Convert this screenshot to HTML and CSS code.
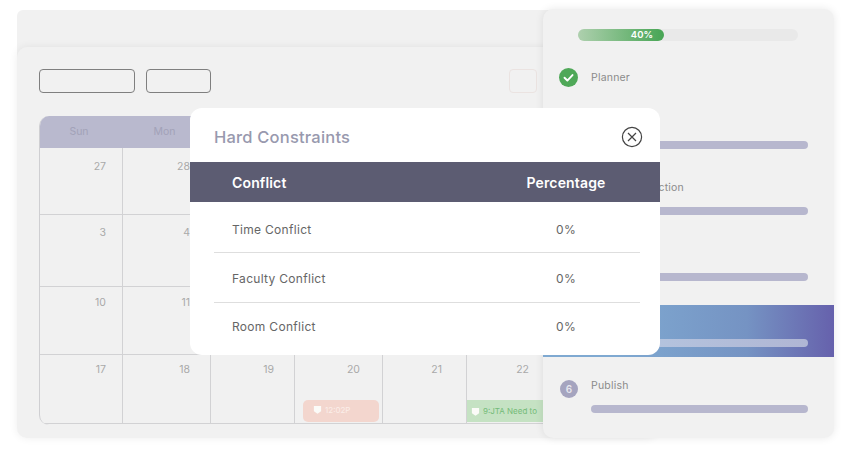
FILE: index.html
```html
<!DOCTYPE html>
<html lang="en">
<head>
<meta charset="utf-8">
<title>Hard Constraints</title>
<link rel="stylesheet" href="styles.css">
</head>
<body>
<div class="stage">
  <div class="win back"></div>
  <section class="win main">
    <div class="toolbar">
      <span class="tbox wide"></span>
      <span class="tbox narrow"></span>
      <span class="tbox pale"></span>
    </div>
    <div class="cal">
      <div class="cal-head">
        <span>Sun</span><span>Mon</span><span></span><span></span><span></span><span></span>
      </div>
      <div class="cal-row r1">
        <div class="cell">27</div><div class="cell">28</div><div class="cell"></div><div class="cell"></div><div class="cell"></div><div class="cell"></div>
      </div>
      <div class="cal-row r2">
        <div class="cell">3</div><div class="cell">4</div><div class="cell"></div><div class="cell"></div><div class="cell"></div><div class="cell"></div>
      </div>
      <div class="cal-row r3">
        <div class="cell">10</div><div class="cell">11</div><div class="cell"></div><div class="cell"></div><div class="cell"></div><div class="cell"></div>
      </div>
      <div class="cal-row r4">
        <div class="cell">17</div><div class="cell">18</div><div class="cell">19</div>
        <div class="cell">20
          <div class="event red"><svg class="ev-ico" viewBox="0 0 10 10"><path d="M1 1h8v6l-4 2.6-4-2.6z"/></svg><span>12:02P</span></div>
        </div>
        <div class="cell">21</div>
        <div class="cell">22
          <div class="event green"><svg class="ev-ico" viewBox="0 0 10 10"><path d="M1 1h8v6l-4 2.6-4-2.6z"/></svg><span>9:JTA Need to</span></div>
        </div>
      </div>
    </div>
  </section>

  <aside class="win side">
    <div class="track"><div class="fill">40%</div></div>
    <div class="planner">
      <svg class="check" viewBox="0 0 20 20"><circle cx="10" cy="10" r="10" fill="#4fa858"/><path d="M5.8 10.3l3 2.9 5.4-5.8" fill="none" stroke="#fff" stroke-width="2" stroke-linecap="round" stroke-linejoin="round"/></svg>
      <span class="label">Planner</span>
    </div>
    <div class="step"><span class="label"></span><div class="bar"></div></div>
    <div class="step"><span class="label">Data Construction</span><div class="bar"></div></div>
    <div class="step"><span class="label"></span><div class="bar"></div></div>
    <div class="step active"><span class="label"></span><div class="bar"></div></div>
    <div class="step"><span class="num">6</span><span class="label">Publish</span><div class="bar"></div></div>
  </aside>

  <section class="modal">
    <header class="modal-head">
      <h2>Hard Constraints</h2>
      <svg class="close" viewBox="0 0 22 22"><circle cx="11" cy="11" r="9.6" fill="none" stroke="#444" stroke-width="1.2"/><path d="M7 7l8 8M15 7l-8 8" stroke="#444" stroke-width="1.2" fill="none"/></svg>
    </header>
    <div class="thead"><span>Conflict</span><span class="pct">Percentage</span></div>
    <div class="trow first"><span>Time Conflict</span><span class="pct">0%</span></div>
    <div class="trow middle"><span>Faculty Conflict</span><span class="pct">0%</span></div>
    <div class="trow last"><span>Room Conflict</span><span class="pct">0%</span></div>
  </section>
</div>
</body>
</html>
```
FILE: styles.css
```css
* { box-sizing: border-box; }
html, body { margin: 0; padding: 0; background: #fff; }
body { font-family: Inter, "Open Sans", sans-serif; overflow: hidden; }

.stage { position: relative; width: 850px; height: 450px; overflow: hidden; }

.win { position: absolute; background: #f1f1f1; }

.back { left: 17px; top: 10px; width: 600px; height: 100px; border-radius: 6px 6px 0 0; }

.main {
  left: 17px; top: 47px; width: 640px; height: 391px;
  padding: 22px 0 0 22px;
  border-radius: 10px;
  box-shadow: 0 0 9px rgba(0,0,0,.07);
}

.toolbar { display: flex; gap: 11px; width: 498px; height: 24px; margin-bottom: 23px; }
.tbox { display: block; border: 1px solid #7f7f7f; border-radius: 4px; }
.wide { width: 96px; }
.narrow { width: 65px; }
.pale { width: 28px; margin-left: auto; border-color: #ebe3e1; }

.cal { width: 504px; height: 309px; overflow: hidden; border-left: 1px solid #cfcfd2; border-radius: 10px 0 0 10px; }
.cal-head, .cal-row { display: grid; grid-template-columns: 83px 88px 84px 88px 84px 77px; }
.cal-head {
  height: 32px; margin-left: -1px; background: #b9b9ce; color: #a2a2b8;
  font-size: 10.5px; text-align: center; line-height: 32px;
}
.cal-head span { padding-right: 3px; }
.cal-row { border-bottom: 1px solid #d2d2d4; }
.r1 { height: 67px; }
.r2 { height: 72px; }
.r3 { height: 68px; }
.r4 { height: 69px; }
.cell {
  position: relative; display: flex; flex-direction: column; align-items: flex-end;
  padding: 11px 16px 0 0;
  border-right: 1px solid #d2d2d4;
  color: #a9a9a9; font-size: 10.5px; line-height: 14px;
}
.cell:last-child { border-right: 0; }
.r1 .cell { padding-top: 12px; }
.r3 .cell { padding-top: 9px; }
.r4 .cell { padding-top: 8px; }
.cal-row .cell:nth-child(n+2) { padding-right: 20px; }
.cal-row .cell:nth-child(4) { padding-right: 22px; }
.cal-row .cell:nth-child(5) { padding-right: 24px; }
.cal-row .cell:nth-child(6) { padding-right: 15px; }

.event {
  display: flex; align-items: center; gap: 3px;
  position: absolute; bottom: 1px; height: 22px;
  font-size: 8px; white-space: nowrap;
}
.event.red { left: 8px; width: 76px; padding: 0 0 3px 10px; background: #f3d6ce; color: #fbeee9; border-radius: 5px; }
.event.green { left: 0; right: 0; padding-left: 4px; background: #c5e2c3; color: #74bb78; }
.ev-ico { width: 9px; height: 9px; fill: #fbfbf8; flex: none; }

.side {
  left: 543px; top: 9px; width: 291px; height: 429px;
  padding-top: 20px;
  border-radius: 10px;
  box-shadow: 0 0 8px rgba(0,0,0,.09);
  overflow: hidden;
}
.track { width: 220px; height: 12px; margin-left: 35px; background: #e9e9e9; border-radius: 6px; }
.fill {
  width: 86px; height: 12px; padding-right: 11px;
  border-radius: 6px;
  background: linear-gradient(90deg, #aed0ae, #47a554);
  color: #fff; font-size: 9.5px; font-weight: 600; line-height: 12px; text-align: right;
}
.planner { display: flex; align-items: center; height: 44px; margin-top: 22px; padding: 0 0 16px 16px; }
.check { width: 19px; height: 19px; flex: none; margin-right: 13px; }
.label { color: #8b8b8b; font-size: 10.5px; letter-spacing: .2px; white-space: nowrap; }
.step { position: relative; height: 66px; padding: 8px 26px 0 48px; }
.step .label { display: block; height: 14px; line-height: 14px; }
.bar { height: 8px; margin-top: 12px; background: #b7b7ce; border-radius: 4px; }
.active { background: linear-gradient(90deg, #7fa9d1 25%, #7593c3 70%, #6661ac) no-repeat 0 0 / 100% 52px; }
.active .bar { background: linear-gradient(90deg, #b6c9e2, #b0b6d4); }
.num {
  position: absolute; left: 17px; top: 9px;
  width: 18px; height: 18px; border-radius: 50%;
  background: #a5a4bf; color: #e6e6ee;
  font-size: 10px; font-weight: 600; line-height: 18px; text-align: center;
}

.modal {
  position: absolute; left: 190px; top: 108px; width: 470px; height: 247px;
  background: #fff; border-radius: 12px; overflow: hidden;
  color: #666;
}
.modal-head { display: flex; align-items: center; justify-content: space-between; height: 54px; padding: 4px 17px 0 24px; }
.modal-head h2 { margin: 0; color: #9899ae; font-size: 16.5px; font-weight: 500; letter-spacing: .2px; }
.close { width: 22px; height: 22px; }
.thead, .trow { display: grid; grid-template-columns: 1fr 148px; align-items: center; }
.thead {
  height: 40px; padding: 0 20px 0 42px;
  background: #5c5c72; color: #fff; font-size: 14px; font-weight: 600; letter-spacing: .15px;
}
.trow {
  height: 50px; margin: 0 20px 0 24px; padding: 4px 0 0 18px;
  border-bottom: 1px solid #dedede;
  font-size: 12px; letter-spacing: .3px;
}
.trow.first { height: 51px; }
.trow.middle { padding-top: 2px; }
.trow.last { height: 46px; padding-top: 0; border-bottom: 0; }
.pct { text-align: center; }
```
